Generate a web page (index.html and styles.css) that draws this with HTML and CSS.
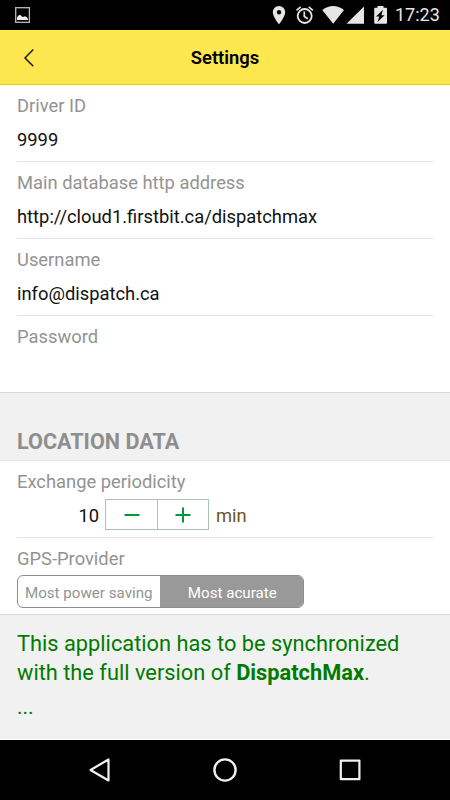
FILE: index.html
```html
<!DOCTYPE html>
<html lang="en">
<head>
<meta charset="utf-8">
<title>Settings</title>
<link rel="stylesheet" href="styles.css">
</head>
<body>
<div class="screen">
  <div class="status">
    <svg class="status-left" width="16" height="16" viewBox="0 0 16 16"><rect x=".7" y=".7" width="13.700" height="14.600" fill="none" stroke="#bbb" stroke-width="1.3"/><path d="M2 13v-2.500l1.500-2 1.500-.7 2 1.700 1 .5 2-.8 2 1 1 1.800v1z" fill="#eee"/></svg>
    <svg class="status-icons" width="120" height="30" viewBox="268 0 120 30" fill="#e6e6e6">
      <path fill-rule="evenodd" d="M279 6a6.2 6.2 0 0 0-6.2 6.2c0 4.7 6.2 12 6.2 12s6.2-7.3 6.2-12A6.2 6.2 0 0 0 279 6zm0 4a2.2 2.2 0 1 1 0 4.400a2.200 2.200 0 0 1 0-4.400z"/>
      <circle cx="304.700" cy="16" r="7" fill="none" stroke="#e6e6e6" stroke-width="1.800"/>
      <path d="M304.300 11.500v5l3.500 2.200M296.500 10.300l4.200-3.500M312.900 10.300l-4.200-3.500" fill="none" stroke="#e6e6e6" stroke-width="1.700"/>
      <path d="M322.300 10Q333.200 2 344 10L333.200 23.700z"/>
      <path d="M364 6.500v17.300h-17.500z"/>
      <path fill-rule="evenodd" d="M377.500 6h6v1.700h2.500q1 0 1 1v14q0 1-1 1h-10.800q-1 0-1-1V8.700q0-1 1-1h2.300zM383 9.700l-7 6.800h3.200l-1.600 5.500 7-6.800h-3.200z"/>
    </svg>
    <span class="time">17:23</span>
  </div>
  <div class="header">
    <svg class="back" width="14" height="20" viewBox="0 0 14 20"><path d="M11.300 1.500L3 10l8.300 8.300" fill="none" stroke="#1b1b1b" stroke-width="1.500"/></svg>
    <h1 class="title">Settings</h1>
  </div>
  <div class="group">
    <div class="row"><div class="label">Driver ID</div><div class="value">9999</div></div>
    <div class="row"><div class="label">Main database http address</div><div class="value">http://cloud1.firstbit.ca/dispatchmax</div></div>
    <div class="row"><div class="label">Username</div><div class="value">info@dispatch.ca</div></div>
    <div class="row last"><div class="label">Password</div></div>
  </div>
  <h2 class="section">LOCATION DATA</h2>
  <div class="group">
    <div class="row">
      <div class="label">Exchange periodicity</div>
      <div class="stepper-line">
        <span class="number">10</span>
        <div class="stepper">
          <div class="step"><svg width="16" height="16" viewBox="0 0 16 16"><path d="M.5 8h15" stroke="#00963a" stroke-width="2"/></svg></div>
          <div class="step"><svg width="16" height="16" viewBox="0 0 16 16"><path d="M.5 8h15M8 .5v15" stroke="#00963a" stroke-width="2"/></svg></div>
        </div>
        <span class="unit">min</span>
      </div>
    </div>
    <div class="row last">
      <div class="label">GPS-Provider</div>
      <div class="segments"><div class="segment">Most power saving</div><div class="segment active">Most acurate</div></div>
    </div>
  </div>
  <div class="note">
    <p class="note-line">This application has to be synchronized</p>
    <p class="note-line">with the full version of <b>DispatchMax</b>.</p>
    <p class="dots">...</p>
  </div>
  <div class="nav">
    <svg width="24" height="26" viewBox="0 0 24 26" fill="none" stroke="#f0f0f0" stroke-width="2.200" stroke-linejoin="round"><path d="M20.500 2.500v21L2.500 13z"/></svg>
    <svg width="26" height="26" viewBox="0 0 26 26" fill="none" stroke="#f0f0f0" stroke-width="2.400"><circle cx="13" cy="13" r="10.600"/></svg>
    <svg width="24" height="24" viewBox="0 0 24 24" fill="none" stroke="#f0f0f0" stroke-width="2.200" stroke-linejoin="round"><rect x="2.800" y="2.600" width="18.600" height="18.600"/></svg>
  </div>
</div>
</body>
</html>
```

FILE: styles.css
```css
* { box-sizing: border-box; }
body { margin: 0; font-family: Roboto, "Liberation Sans", sans-serif; font-size: 18.35px; color: #111; }
h1, h2, p { margin: 0; }
svg { display: block; flex: none; }
.screen { width: 450px; height: 800px; background: #fff; overflow: hidden; }
.status { height: 30px; background: #000; display: flex; align-items: center; padding-left: 15px; }
.status-icons { margin-left: 237px; }
.time { margin-left: 7px; font-size: 18px; color: #e6e6e6; line-height: 30px; white-space: nowrap; }
.header { height: 55px; background: #fce74f; border-top: 1px solid #ffef45; border-bottom: 1px solid #edcf12; display: grid; grid-template-columns: 60px 1fr 60px; align-items: center; }
.back { margin-left: 22px; }
.title { text-align: center; font-size: 18.4px; line-height: 24px; font-weight: 600; color: #000; }
.row { height: 77px; margin: 0 17px; padding-top: 10px; border-bottom: 1px solid #e3e3e3; }
.last { height: 76px; border-bottom: 0; }
.label { line-height: 21px; color: #939393; white-space: nowrap; }
.value { margin-top: 13px; line-height: 21px; color: #111; white-space: nowrap; }
.section { height: 69px; background: #f1f1f1; border-top: 1px solid #d9d9d9; border-bottom: 1px solid #e6e6e6; padding: 36px 17px 0; font-size: 21.6px; line-height: 26px; font-weight: 700; color: #8e8e8e; }
.stepper-line { margin-top: 7px; display: flex; height: 31px; line-height: 33px; }
.number { width: 82px; text-align: right; }
.stepper { width: 104px; margin-left: 6px; border: 1px solid #a9c5ab; display: flex; }
.step { flex: 1; padding-left: 1px; display: flex; align-items: center; justify-content: center; }
.step + .step { border-left: 1px solid #a9c5ab; }
.unit { margin-left: 7px; color: #6a5717; }
.segments { width: 287px; height: 33px; margin-top: 6px; border: 1px solid #8d8d8d; border-radius: 6px; display: flex; overflow: hidden; }
.segment { width: 141.5px; text-align: center; font-size: 15.15px; line-height: 34px; color: #939393; white-space: nowrap; }
.active { flex: 1; padding-left: 2px; background: #999; color: #fff; }
.note { height: 126px; background: #f1f1f1; border-top: 1px solid #dcdcdc; border-bottom: 1px solid #fff; padding: 14px 17px 0; color: #007b00; }
.note-line { font-size: 21.8px; line-height: 29px; white-space: nowrap; }
.dots { font-size: 21px; line-height: 29px; margin-top: 6px; }
.nav { height: 60px; background: #000; display: flex; justify-content: space-between; padding: 0 88px; align-items: center; }
```
